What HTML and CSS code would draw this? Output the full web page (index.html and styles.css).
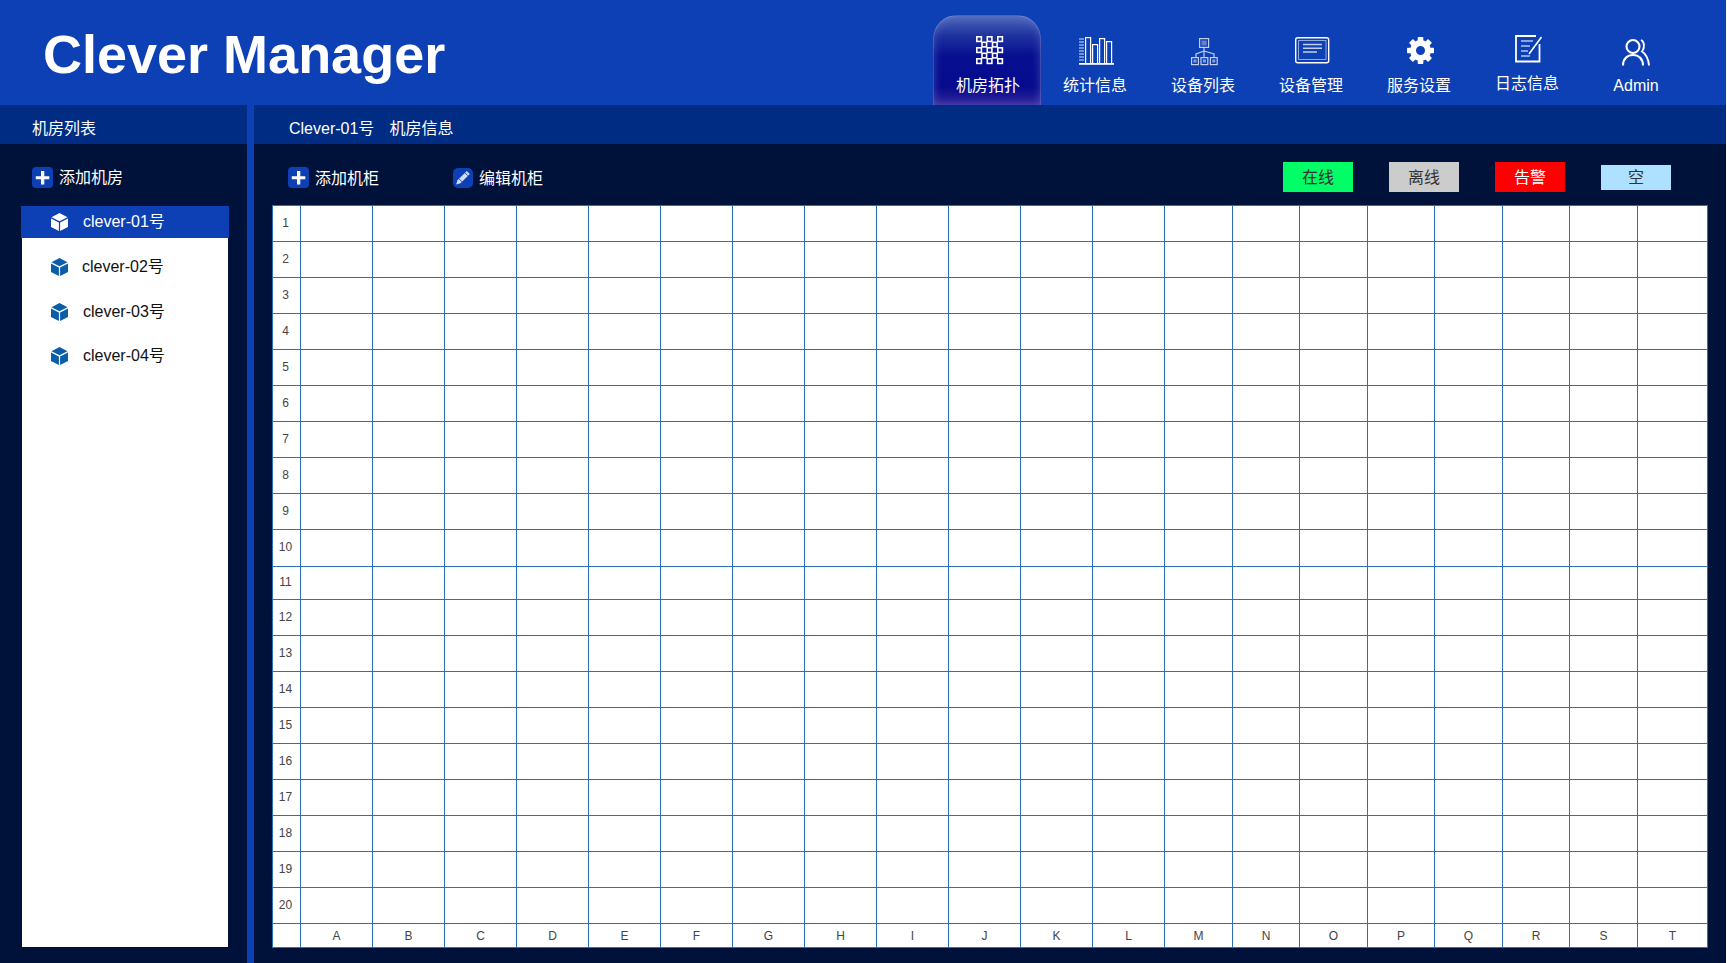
FILE: index.html
```html
<!DOCTYPE html>
<html lang="zh-CN">
<head>
<meta charset="utf-8">
<title>Clever Manager</title>
<link rel="stylesheet" href="styles.css">
</head>
<body>
<header class="header">
  <h1 class="logo">Clever Manager</h1>
  <nav class="nav">
    <a class="nav-item active">
      <svg class="nav-icon" viewBox="0 0 40 32" fill="none" stroke="#fff" stroke-width="1.6">
        <rect x="9.8" y="1.8" width="4.6" height="4.6"/><rect x="20.3" y="1.8" width="4.6" height="4.6"/><rect x="30.8" y="1.8" width="4.6" height="4.6"/>
        <rect x="15" y="7.3" width="4.6" height="4.6"/><rect x="25.5" y="7.3" width="4.6" height="4.6"/>
        <rect x="9.8" y="12.8" width="4.6" height="4.6"/><rect x="20.3" y="12.8" width="4.6" height="4.6"/><rect x="30.8" y="12.8" width="4.6" height="4.6"/>
        <rect x="15" y="18.3" width="4.6" height="4.6"/><rect x="25.5" y="18.3" width="4.6" height="4.6"/>
        <rect x="9.8" y="23.8" width="4.6" height="4.6"/><rect x="20.3" y="23.8" width="4.6" height="4.6"/><rect x="30.8" y="23.8" width="4.6" height="4.6"/>
      </svg>
      <span class="nav-label">机房拓扑</span>
    </a>
    <a class="nav-item">
      <svg class="nav-icon" viewBox="0 0 40 32" fill="none" stroke="#fff" stroke-width="1.2">
        <path d="M4 4h5M4 7h5M4 10h5M4 13h5M4 16h5M4 19h5M4 22h5M4 25h5" stroke-opacity=".85"/>
        <rect x="10.6" y="2.6" width="5" height="26"/><rect x="17.6" y="9.6" width="5" height="19"/><rect x="24.6" y="3.6" width="5" height="25"/><rect x="31.6" y="6.6" width="5" height="22"/>
        <path d="M4 28.8h35" stroke-width="1.8"/>
      </svg>
      <span class="nav-label">统计信息</span>
    </a>
    <a class="nav-item">
      <svg class="nav-icon" viewBox="0 0 40 32" fill="none" stroke="#fff" stroke-opacity=".75" stroke-width="1.2">
        <rect x="16.6" y="3.6" width="9" height="8.8"/><rect x="18.5" y="5.5" width="5.2" height="5" fill="#fff" fill-opacity=".35" stroke="none"/>
        <path d="M21 12.4v9.6M21 16l-8 3v3M21 16l10 3v3"/>
        <rect x="8.6" y="22.6" width="6.8" height="7"/><rect x="18" y="22.6" width="6.8" height="7"/><rect x="27.4" y="22.6" width="6.8" height="7"/>
        <rect x="10.5" y="24.5" width="3" height="3" fill="#fff" fill-opacity=".5" stroke="none"/><rect x="19.9" y="24.5" width="3" height="3" fill="#fff" fill-opacity=".5" stroke="none"/><rect x="29.3" y="24.5" width="3" height="3" fill="#fff" fill-opacity=".5" stroke="none"/>
      </svg>
      <span class="nav-label">设备列表</span>
    </a>
    <a class="nav-item">
      <svg class="nav-icon" viewBox="0 0 40 32" fill="none" stroke="#fff">
        <rect x="4.7" y="2.7" width="33" height="25" rx="2" stroke-width="1.4"/>
        <rect x="7.5" y="5.5" width="27.5" height="19" stroke-opacity=".55"/>
        <path d="M12 9.5h19M12 13.2h19M12 17h14" stroke-opacity=".75" stroke-width="1.4"/>
      </svg>
      <span class="nav-label">设备管理</span>
    </a>
    <a class="nav-item">
      <svg class="nav-icon" viewBox="0 0 40 32" fill="#fff">
        <g transform="translate(21.5 15.5)">
          <circle r="7.5" fill="none" stroke="#fff" stroke-width="6"/>
          <rect x="-2.800" y="-13.500" width="5.600" height="5" rx=".8"/>
          <rect x="-2.800" y="-13.500" width="5.600" height="5" rx=".8" transform="rotate(45)"/>
          <rect x="-2.800" y="-13.500" width="5.600" height="5" rx=".8" transform="rotate(90)"/>
          <rect x="-2.800" y="-13.500" width="5.600" height="5" rx=".8" transform="rotate(135)"/>
          <rect x="-2.800" y="-13.500" width="5.600" height="5" rx=".8" transform="rotate(180)"/>
          <rect x="-2.800" y="-13.500" width="5.600" height="5" rx=".8" transform="rotate(225)"/>
          <rect x="-2.800" y="-13.500" width="5.600" height="5" rx=".8" transform="rotate(270)"/>
          <rect x="-2.800" y="-13.500" width="5.600" height="5" rx=".8" transform="rotate(315)"/>
        </g>
      </svg>
      <span class="nav-label">服务设置</span>
    </a>
    <a class="nav-item nav-item-log">
      <svg class="nav-icon" viewBox="0 0 40 32" fill="none" stroke="#fff">
        <path d="M29 1H9v25.500h23.500V9" stroke-width="1.800"/>
        <path d="M14 6h12M14 11h9M14 16h7M14 21h9" stroke-opacity=".7" stroke-width="1.400"/>
        <path d="M34.500 2L22 19" stroke-width="1.600"/>
      </svg>
      <span class="nav-label">日志信息</span>
    </a>
    <a class="nav-item nav-item-admin">
      <svg class="nav-icon" viewBox="0 0 40 32" fill="none" stroke="#fff" stroke-width="2.100">
        <circle cx="18" cy="11.500" r="6.500"/>
        <path d="M8 30.500c0-7 4.500-10.500 10-10.500s10 3.500 10 10.500"/>
        <path d="M26 5c3.500 1.500 4 8 1 11.500c4 2.500 6.500 8 7 14" stroke-width="1.900"/>
      </svg>
      <span class="nav-label">Admin</span>
    </a>
  </nav>
</header>
<main class="main">
  <aside class="side">
    <div class="subbar subbar-side">机房列表</div>
    <div class="side-add">
      <span class="tool-icon">
        <svg viewBox="0 0 21 21" fill="#fff"><path d="M9 4h3.300v5.200h5v3h-5v5.300H9v-5.300H3.800v-3H9z"/></svg>
      </span>
      <span>添加机房</span>
    </div>
    <ul class="room-list">
      <li class="room room-active">
        <svg class="cube" viewBox="0 0 17 18"><path d="M8.500 0l8 4.200-8 4-8-4zM0 5.500l7.900 4V18L0 14zM17 5.500l-7.900 4V18L17 14z"/></svg>
        <span class="room-name">clever-01号</span>
      </li>
      <li class="room room-second">
        <svg class="cube" viewBox="0 0 17 18"><path d="M8.500 0l8 4.200-8 4-8-4zM0 5.500l7.900 4V18L0 14zM17 5.500l-7.900 4V18L17 14z"/></svg>
        <span class="room-name">clever-02号</span>
      </li>
      <li class="room">
        <svg class="cube" viewBox="0 0 17 18"><path d="M8.500 0l8 4.200-8 4-8-4zM0 5.500l7.900 4V18L0 14zM17 5.500l-7.900 4V18L17 14z"/></svg>
        <span class="room-name">clever-03号</span>
      </li>
      <li class="room">
        <svg class="cube" viewBox="0 0 17 18"><path d="M8.500 0l8 4.200-8 4-8-4zM0 5.500l7.900 4V18L0 14zM17 5.500l-7.900 4V18L17 14z"/></svg>
        <span class="room-name">clever-04号</span>
      </li>
    </ul>
  </aside>
  <section class="content">
    <div class="subbar subbar-content"><span>Clever-01号</span><span>机房信息</span></div>
    <div class="toolbar">
      <div class="tool tool-add">
        <span class="tool-icon">
          <svg viewBox="0 0 21 21" fill="#fff"><path d="M9 4h3.300v5.200h5v3h-5v5.300H9v-5.300H3.800v-3H9z"/></svg>
        </span>
        <span class="tool-text">添加机柜</span>
      </div>
      <div class="tool tool-edit">
        <span class="tool-icon tool-icon-edit">
          <svg viewBox="0 0 20 20"><path fill="#cfdcf7" d="M13.800 3l3 3-9.300 9.300-4.300 1.300 1.300-4.300z"/><path fill="none" stroke="#0d3fb5" stroke-width=".9" d="M12 4.800l3 3M6 10.800l3 3"/></svg>
        </span>
        <span class="tool-text">编辑机柜</span>
      </div>
      <div class="legend">
        <span class="chip chip-online">在线</span>
        <span class="chip chip-offline">离线</span>
        <span class="chip chip-alarm">告警</span>
        <span class="chip chip-empty">空</span>
      </div>
    </div>
    <div class="grid">
      <span class="row-no">1</span><span></span><span></span><span></span><span></span><span></span><span></span><span></span><span></span><span></span><span></span><span></span><span></span><span></span><span></span><span></span><span></span><span></span><span></span><span></span><span></span>
      <span class="row-no">2</span><span></span><span></span><span></span><span></span><span></span><span></span><span></span><span></span><span></span><span></span><span></span><span></span><span></span><span></span><span></span><span></span><span></span><span></span><span></span><span></span>
      <span class="row-no">3</span><span></span><span></span><span></span><span></span><span></span><span></span><span></span><span></span><span></span><span></span><span></span><span></span><span></span><span></span><span></span><span></span><span></span><span></span><span></span><span></span>
      <span class="row-no">4</span><span></span><span></span><span></span><span></span><span></span><span></span><span></span><span></span><span></span><span></span><span></span><span></span><span></span><span></span><span></span><span></span><span></span><span></span><span></span><span></span>
      <span class="row-no">5</span><span></span><span></span><span></span><span></span><span></span><span></span><span></span><span></span><span></span><span></span><span></span><span></span><span></span><span></span><span></span><span></span><span></span><span></span><span></span><span></span>
      <span class="row-no">6</span><span></span><span></span><span></span><span></span><span></span><span></span><span></span><span></span><span></span><span></span><span></span><span></span><span></span><span></span><span></span><span></span><span></span><span></span><span></span><span></span>
      <span class="row-no">7</span><span></span><span></span><span></span><span></span><span></span><span></span><span></span><span></span><span></span><span></span><span></span><span></span><span></span><span></span><span></span><span></span><span></span><span></span><span></span><span></span>
      <span class="row-no">8</span><span></span><span></span><span></span><span></span><span></span><span></span><span></span><span></span><span></span><span></span><span></span><span></span><span></span><span></span><span></span><span></span><span></span><span></span><span></span><span></span>
      <span class="row-no">9</span><span></span><span></span><span></span><span></span><span></span><span></span><span></span><span></span><span></span><span></span><span></span><span></span><span></span><span></span><span></span><span></span><span></span><span></span><span></span><span></span>
      <span class="row-no">10</span><span></span><span></span><span></span><span></span><span></span><span></span><span></span><span></span><span></span><span></span><span></span><span></span><span></span><span></span><span></span><span></span><span></span><span></span><span></span><span></span>
      <span class="row-no">11</span><span></span><span></span><span></span><span></span><span></span><span></span><span></span><span></span><span></span><span></span><span></span><span></span><span></span><span></span><span></span><span></span><span></span><span></span><span></span><span></span>
      <span class="row-no">12</span><span></span><span></span><span></span><span></span><span></span><span></span><span></span><span></span><span></span><span></span><span></span><span></span><span></span><span></span><span></span><span></span><span></span><span></span><span></span><span></span>
      <span class="row-no">13</span><span></span><span></span><span></span><span></span><span></span><span></span><span></span><span></span><span></span><span></span><span></span><span></span><span></span><span></span><span></span><span></span><span></span><span></span><span></span><span></span>
      <span class="row-no">14</span><span></span><span></span><span></span><span></span><span></span><span></span><span></span><span></span><span></span><span></span><span></span><span></span><span></span><span></span><span></span><span></span><span></span><span></span><span></span><span></span>
      <span class="row-no">15</span><span></span><span></span><span></span><span></span><span></span><span></span><span></span><span></span><span></span><span></span><span></span><span></span><span></span><span></span><span></span><span></span><span></span><span></span><span></span><span></span>
      <span class="row-no">16</span><span></span><span></span><span></span><span></span><span></span><span></span><span></span><span></span><span></span><span></span><span></span><span></span><span></span><span></span><span></span><span></span><span></span><span></span><span></span><span></span>
      <span class="row-no">17</span><span></span><span></span><span></span><span></span><span></span><span></span><span></span><span></span><span></span><span></span><span></span><span></span><span></span><span></span><span></span><span></span><span></span><span></span><span></span><span></span>
      <span class="row-no">18</span><span></span><span></span><span></span><span></span><span></span><span></span><span></span><span></span><span></span><span></span><span></span><span></span><span></span><span></span><span></span><span></span><span></span><span></span><span></span><span></span>
      <span class="row-no">19</span><span></span><span></span><span></span><span></span><span></span><span></span><span></span><span></span><span></span><span></span><span></span><span></span><span></span><span></span><span></span><span></span><span></span><span></span><span></span><span></span>
      <span class="row-no">20</span><span></span><span></span><span></span><span></span><span></span><span></span><span></span><span></span><span></span><span></span><span></span><span></span><span></span><span></span><span></span><span></span><span></span><span></span><span></span><span></span>
      <span></span><span>A</span><span>B</span><span>C</span><span>D</span><span>E</span><span>F</span><span>G</span><span>H</span><span>I</span><span>J</span><span>K</span><span>L</span><span>M</span><span>N</span><span>O</span><span>P</span><span>Q</span><span>R</span><span>S</span><span>T</span>
    </div>
  </section>
</main>
</body>
</html>
```
FILE: styles.css
```css
* { box-sizing: border-box; }
html { background: #fff; height: 100%; overflow: hidden; }
body {
  margin: 0;
  width: 1726px;
  height: 963px;
  display: flex;
  flex-direction: column;
  background: #0d3fb5;
  font: 16px/20px "Liberation Sans", "Noto Sans CJK SC", sans-serif;
  color: #fff;
  overflow: hidden;
}

/* header */
.header { height: 105px; flex: none; display: flex; justify-content: space-between; }
.logo { margin: 21px 0 0 43px; font-size: 54px; line-height: 66px; font-weight: 700; letter-spacing: 0; }
.nav { display: flex; margin: 15px 37px 0 0; }
.nav-item {
  width: 108px;
  height: 90px;
  display: flex;
  flex-direction: column;
  align-items: center;
  padding-top: 20px;
}
.nav-item.active {
  border: 1px solid rgba(170, 185, 235, .35);
  border-bottom: 0;
  border-radius: 24px 24px 0 0;
  padding-top: 19px;
  background: linear-gradient(#4d69bb 0, #1f329f 22%, #070f90 45%, #060b8e 80%, #33259a 100%);
  box-shadow: inset 0 0 8px rgba(120, 135, 215, .45);
}
.nav-icon { width: 40px; height: 32px; flex: none; }
.nav-label { margin-top: 9px; white-space: nowrap; }
.nav-item.active .nav-label { margin-left: 2px; }
.nav-item-log .nav-label { margin-top: 7px; }
.nav-item-admin .nav-label { margin: 9px 0 0 2px; }

/* panels */
.main { flex: 1; display: flex; gap: 7px; min-height: 0; }
.subbar {
  height: 39px;
  flex: none;
  background: #002c84;
  display: flex;
  align-items: center;
  padding-top: 8px;
}
.subbar-side { padding-left: 32px; }
.subbar-content { padding-left: 35px; gap: 15px; }

.side { width: 247px; flex: none; background: #00123a; display: flex; flex-direction: column; }
.side-add { height: 62px; flex: none; display: flex; align-items: center; gap: 6px; padding: 5px 0 0 32px; }
.tool-icon {
  width: 21px;
  height: 21px;
  flex: none;
  background: #0d3fb5;
  border-radius: 4px;
  display: block;
}
.tool-icon svg { display: block; width: 100%; height: 100%; }
.tool-icon-edit { width: 20px; height: 20px; border-radius: 5px; }

.room-list {
  list-style: none;
  margin: 0 19px 16px 22px;
  padding: 0;
  flex: 1;
  background: #fff;
}
.room { height: 44.500px; display: flex; align-items: center; padding-left: 29px; color: #111; }
.room-active {
  height: 32px;
  margin: 0 -1px 7px;
  padding-left: 30px;
  background: #0d3fb5;
  color: #fff;
}
.cube { width: 17px; height: 18px; flex: none; fill: #0a5da9; }
.room-active .cube { fill: #fff; }
.room-name { margin-left: 15px; }
.room-second .room-name { margin-left: 14px; }

/* content */
.content { flex: 1; background: #00123a; display: flex; flex-direction: column; min-width: 0; }
.toolbar { height: 61px; flex: none; display: flex; align-items: flex-start; padding: 18px 55px 0 34px; }
.tool { display: flex; align-items: center; height: 21px; margin-top: 5px; gap: 6px; }
.tool-add { width: 165px; }
.tool-text { margin-top: 2px; }
.legend { margin-left: auto; display: flex; gap: 36px; align-items: center; }
.chip { width: 70px; height: 30px; display: flex; align-items: center; justify-content: center; color: #333; padding-top: 1px; }
.chip-online { background: #00ff66; }
.chip-offline { background: #ccc; }
.chip-alarm { background: #f00; color: #fff; }
.chip-empty { background: #aee0ff; height: 25px; }

.grid {
  margin-left: 18px;
  width: 1436px;
  height: 743px;
  background: #fff;
  border-top: 1px solid #2a72b5;
  border-left: 1px solid #2a72b5;
  display: grid;
  grid-template-columns: 28px repeat(12, 72px) 68px 67px 68px 67px 68px 67px 68px 70px;
  grid-template-rows: repeat(9, 36px) 37px 33px repeat(9, 36px) 24px;
  font-size: 12px;
  line-height: 14px;
  color: #444;
}
.grid > span {
  border-right: 1px solid #2a72b5;
  border-bottom: 1px solid #2a72b5;
  display: flex;
  align-items: center;
  justify-content: center;
}
.grid > .row-no { padding: 0 2px 2px 0; }
```
